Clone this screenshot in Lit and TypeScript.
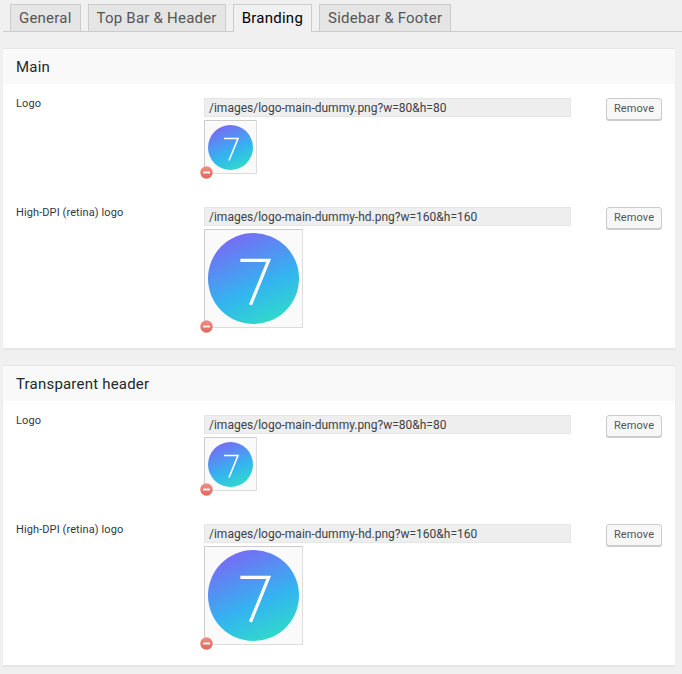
import { LitElement, html, css } from "lit";
import { customElement, property } from "lit/decorators.js";

let uid = 0;

@customElement("logo-field")
class LogoField extends LitElement {
  @property() label = "";
  @property() url = "";
  @property({ type: Number }) size = 45;
  @property({ type: Number }) box = 53;
  @property({ type: Number }) boxh = 54;

  static styles = css`
    :host { display: grid; grid-template-columns: 188px 367px 56px; justify-content: start; }
    .label { font-size: 11px; line-height: 13px; letter-spacing: 0.1px; color: #32373c; margin-top: -1px; height: 13px; }
    .input { height: 19px; box-sizing: border-box; background: #eee; border: 1px solid #e6e6e6; font-size: 12px; line-height: 18px; color: #3c4146; padding-left: 4px; white-space: nowrap; overflow: hidden; }
    .thumb { position: relative; margin-top: 3px; box-sizing: border-box; background: #fafafa; border: 1px solid #ddd; border-top-color: #ccc; border-left-color: #ccc; display: flex; align-items: center; justify-content: center; }
    .thumb svg.logo { display: block; }
    .minus { position: absolute; left: -5px; bottom: -6px; width: 13px; height: 13px; display: block; }
    .btn { grid-column: 3; grid-row: 1; width: 56px; height: 22px; box-sizing: border-box; margin-left: 35px; border: 1px solid #ccc; border-radius: 3px; background: #f7f7f7; box-shadow: 0 1px 0 #ccc; font: 11px/20px Roboto, sans-serif; letter-spacing: 0.1px; color: #555; text-align: center; padding: 0; }
    .control { grid-column: 2; }
  `;

  render() {
    const id = `g${uid++}`;
    const r = `r${id}`;
    return html`
      <div class="label">${this.label}</div>
      <div class="control">
        <div class="input">${this.url}</div>
        <div class="thumb" style="width:${this.box}px;height:${this.boxh}px">
          <svg class="logo" width=${this.size} height=${this.size} viewBox="0 0 90 90">
            <defs>
              <linearGradient id=${id} x1="0.28" y1="0" x2="0.72" y2="1">
                <stop offset="0" stop-color="#7a68f4"></stop>
                <stop offset="0.6" stop-color="#33b4f0"></stop>
                <stop offset="1" stop-color="#30dcc8"></stop>
              </linearGradient>
            </defs>
            <circle cx="45" cy="45" r="45" fill="url(#${id})"></circle>
            <path d="M32 27H60L42 71" fill="none" stroke="#fff" stroke-width="3.2"></path>
          </svg>
          <svg class="minus" viewBox="0 0 13 13">
            <defs>
              <linearGradient id=${r} x1="0" y1="0" x2="0" y2="1">
                <stop offset="0" stop-color="#ef8f86"></stop>
                <stop offset="1" stop-color="#e2665c"></stop>
              </linearGradient>
            </defs>
            <circle cx="6.5" cy="6.5" r="6.2" fill="url(#${r})"></circle>
            <rect x="3" y="5.6" width="7" height="1.8" fill="#fff"></rect>
          </svg>
        </div>
      </div>
      <button class="btn">Remove</button>
    `;
  }
}

@customElement("app-root")
class AppRoot extends LitElement {
  static styles = css`
    :host { display: block; width: 682px; height: 674px; background: #f0f0f0; font-family: Roboto, "Liberation Sans", sans-serif; overflow: hidden; }
    .tabs { display: flex; gap: 7px; height: 32px; box-sizing: border-box; margin-left: 3px; padding: 4px 0 0 7px; border-bottom: 1px solid #ccc; }
    .tab { height: 27px; box-sizing: border-box; padding: 0 8px; border: 1px solid #ccc; border-bottom: none; background: #e5e5e5; color: #555; font-size: 15px; line-height: 27px; letter-spacing: 0.22px; }
    .tab.active { background: #f0f0f0; color: #000; height: 28px; letter-spacing: 0.25px; }
    .content { padding: 16px 7px 0 3px; display: flex; flex-direction: column; gap: 16px; }
    .card { background: #fff; border: 1px solid #e5e5e5; border-left: none; border-right: none; box-shadow: 0 1px 1px rgba(0,0,0,.04); height: 301px; box-sizing: border-box; }
    .head { height: 35px; background: #f9f9f9; padding-left: 13px; font-size: 15px; line-height: 36px; letter-spacing: 0.2px; color: #23282d; }
    .fields { padding: 14px 0 0 13px; display: flex; flex-direction: column; }
    logo-field.big { margin-top: 33px; }
  `;

  private card(title: string) {
    return html`
      <section class="card">
        <div class="head">${title}</div>
        <div class="fields">
          <logo-field label="Logo" url="/images/logo-main-dummy.png?w=80&h=80" size="45" box="53" boxh="54"></logo-field>
          <logo-field class="big" label="High-DPI (retina) logo" url="/images/logo-main-dummy-hd.png?w=160&h=160" size="91" box="99" boxh="99"></logo-field>
        </div>
      </section>
    `;
  }

  render() {
    return html`
      <nav class="tabs">
        <div class="tab">General</div>
        <div class="tab">Top Bar &amp; Header</div>
        <div class="tab active">Branding</div>
        <div class="tab">Sidebar &amp; Footer</div>
      </nav>
      <div class="content">
        ${this.card("Main")}
        ${this.card("Transparent header")}
      </div>
    `;
  }
}
